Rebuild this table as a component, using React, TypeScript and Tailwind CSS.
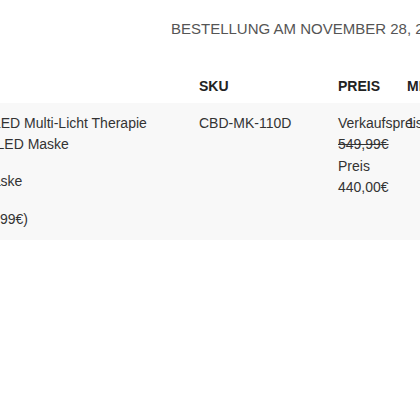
const priceLines = [
  { text: "Verkaufspreis", strike: false },
  { text: "549,99€", strike: true },
  { text: "Preis", strike: false },
  { text: "440,00€", strike: false },
];

export default function App() {
  return (
    <div className="h-[420px] w-[420px] overflow-hidden bg-white font-['Liberation_Sans',Arial,sans-serif] text-[14px] text-[#333]">
      <div className="flex h-[56px] items-center whitespace-nowrap pl-[171px] pt-[2px] text-[15px] text-[#555]">
        BESTELLUNG AM NOVEMBER 28, 2023
      </div>

      <div className="mt-[14px] grid h-[33px] grid-cols-[199px_139px_69px_200px] items-center whitespace-nowrap text-[14px] font-bold text-[#222]">
        <div />
        <div>SKU</div>
        <div>PREIS</div>
        <div>MENGE</div>
      </div>

      <div className="grid h-[137px] grid-cols-[199px_139px_69px_200px] whitespace-nowrap bg-[#f8f8f8] pt-[10px] leading-[21.3px]">
        <div className="overflow-hidden">
          <div className="-ml-[7px]">LED Multi-Licht Therapie</div>
          <div className="-ml-[12px]">- LED Maske</div>
          <div className="mt-[15px] -ml-[19px]">Maske</div>
          <div className="mt-[17px] -ml-[32px]">(549,99€)</div>
        </div>
        <div>CBD-MK-110D</div>
        <div>
          {priceLines.map((line) => (
            <div key={line.text} className={line.strike ? "line-through" : ""}>
              {line.text}
            </div>
          ))}
        </div>
        <div>1</div>
      </div>
    </div>
  );
}
